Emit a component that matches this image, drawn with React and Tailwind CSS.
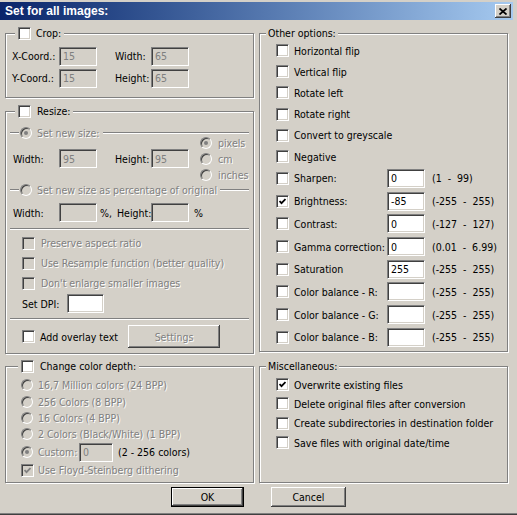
import React from "react";

const sunken =
  "border border-t-[#808080] border-l-[#808080] border-b-white border-r-white shadow-[inset_1px_1px_0_#404040,inset_-1px_-1px_0_#d4d0c8]";
const etched = "border border-[#808080] shadow-[inset_1px_1px_0_#fff,1px_1px_0_#fff]";
const grey = "text-[#808080] [text-shadow:1px_1px_0_#fff]";

function Field({ value = "", disabled = false, className = "w-[38px]" }) {
  return (
    <div
      className={`h-[19px] shrink-0 flex items-center pl-[3px] ${sunken} ${className} ${
        disabled ? "bg-[#d4d0c8] text-[#808080]" : "bg-white text-black"
      }`}
    >
      {value}
    </div>
  );
}

function Check({ checked = false, disabled = false }) {
  return (
    <span
      className={`w-[13px] h-[13px] shrink-0 flex items-center justify-center ${sunken} ${
        disabled ? "bg-[#d4d0c8]" : "bg-white"
      }`}
    >
      {checked && (
        <svg width="7" height="7" viewBox="0 0 7 7">
          <polyline points="0.5,3 2.5,5.2 6.5,1" fill="none" stroke={disabled ? "#808080" : "#000"} strokeWidth="1.8" />
        </svg>
      )}
    </span>
  );
}

function Radio({ checked = false }) {
  return (
    <span className={`w-[12px] h-[12px] shrink-0 rounded-full flex items-center justify-center bg-[#d4d0c8] ${sunken}`}>
      {checked && <span className="w-[4px] h-[4px] rounded-full bg-[#808080]" />}
    </span>
  );
}

function Line({ className = "" }) {
  return <div className={`h-[2px] border-t border-t-[#808080] border-b border-b-white ${className}`} />;
}

const plain = ["Horizontal flip", "Vertical flip", "Rotate left", "Rotate right", "Convert to greyscale", "Negative"];

const valued = [
  ["Sharpen:", "0", "(1  -  99)", false],
  ["Brightness:", "-85", "(-255  -  255)", true],
  ["Contrast:", "0", "(-127  -  127)", false],
  ["Gamma correction:", "0", "(0.01  -  6.99)", false],
  ["Saturation", "255", "(-255  -  255)", false],
  ["Color balance - R:", "", "(-255  -  255)", false],
  ["Color balance - G:", "", "(-255  -  255)", false],
  ["Color balance - B:", "", "(-255  -  255)", false],
];

const misc = [
  ["Overwrite existing files", true],
  ["Delete original files after conversion", false],
  ["Create subdirectories in destination folder", false],
  ["Save files with original date/time", false],
];

const depths = [
  ["16,7 Million colors (24 BPP)", "h-[16px]"],
  ["256 Colors (8 BPP)", "h-[17px]"],
  ["16 Colors (4 BPP)", "h-[16px]"],
  ["2 Colors (Black/White) (1 BPP)", "h-[16px]"],
];

export default function App() {
  return (
    <div className="w-[517px] h-[515px] overflow-hidden bg-[#d4d0c8] pt-[2px] flex flex-col whitespace-nowrap font-['DejaVu_Sans_Condensed','Liberation_Sans',Arial,sans-serif] text-[10.5px] leading-[14px] text-black shadow-[inset_0_-1px_0_#404040,inset_0_-2px_0_#808080]">
      {/* title bar */}
      <div className="h-[18px] mr-[4px] flex items-center justify-between pl-[5px] pr-[2px] bg-linear-to-r from-[#0a246a] to-[#a6caf0]">
        <span className="font-['Liberation_Sans',Arial,sans-serif] font-bold text-[12px] text-white">Set for all images:</span>
        <button className="w-[16px] h-[14px] flex items-center justify-center bg-[#d4d0c8] shadow-[inset_-1px_-1px_0_#404040,inset_1px_1px_0_#fff,inset_-2px_-2px_0_#808080]">
          <svg width="8" height="7" viewBox="0 0 8 7">
            <path d="M0.5 0.5 L7.5 6.5 M7.5 0.5 L0.5 6.5" stroke="#000" strokeWidth="1.7" />
          </svg>
        </button>
      </div>

      <div className="flex pt-[6px]">
        {/* left column */}
        <div className="ml-[5px] w-[249px] flex flex-col">
          <fieldset className={`h-[72px] ${etched}`}>
            <legend className="ml-[9px] px-[3px] bg-[#d4d0c8]">
              <div className="h-[14px] flex items-center gap-[5px]">
                <Check />
                <span>Crop:</span>
              </div>
            </legend>
            <div className="pt-[5px] pl-[6px]">
              {[
                ["X-Coord.:", "Width:"],
                ["Y-Coord.:", "Height:"],
              ].map(([a, b]) => (
                <div key={a} className="h-[22px] flex items-center">
                  <span className="w-[47px]">{a}</span>
                  <Field value="15" disabled />
                  <span className="ml-[18px] w-[36px]">{b}</span>
                  <Field value="65" disabled />
                </div>
              ))}
            </div>
          </fieldset>

          <fieldset className={`mt-[6px] h-[250px] ${etched}`}>
            <legend className="ml-[9px] px-[3px] bg-[#d4d0c8]">
              <div className="h-[14px] flex items-center gap-[6px]">
                <Check />
                <span>Resize:</span>
              </div>
            </legend>
            <div className="px-[4px] mt-[8px] h-[14px] flex items-center">
              <Line className="w-[9px]" />
              <span className="ml-[1px]">
                <Radio checked />
              </span>
              <span className={`ml-[5px] ${grey}`}>Set new size:</span>
              <Line className="flex-1 ml-[3px]" />
            </div>
            <div className="-mt-[5px] h-[48px] flex">
              <div className="w-[194px] pl-[7px] pt-[14px]">
                <div className="h-[19px] flex items-center">
                  <span className="w-[46px]">Width:</span>
                  <Field value="95" disabled />
                  <span className="ml-[18px] w-[36px]">Height:</span>
                  <Field value="95" disabled />
                </div>
              </div>
              <div className="flex flex-col">
                {[
                  ["pixels", true],
                  ["cm", false],
                  ["inches", false],
                ].map(([l, c]) => (
                  <div key={l} className="h-[16px] flex items-center gap-[6px]">
                    <Radio checked={c} />
                    <span className={grey}>{l}</span>
                  </div>
                ))}
              </div>
            </div>
            <div className="px-[4px] h-[14px] flex items-center">
              <Line className="w-[9px]" />
              <span className="ml-[1px]">
                <Radio />
              </span>
              <span className={`ml-[5px] ${grey}`}>Set new size as percentage of original</span>
              <Line className="flex-1 ml-[3px]" />
            </div>
            <div className="mt-[6px] pl-[7px] h-[19px] flex items-center">
              <span className="w-[46px]">Width:</span>
              <Field disabled />
              <span className="ml-[3px] w-[17px]">%,</span>
              <span className="w-[34px]">Height:</span>
              <Field disabled />
              <span className="ml-[5px]">%</span>
            </div>
            <Line className="mt-[6px] mx-[4px]" />
            <div className="mt-[3px] pl-[16px]">
              {["Preserve aspect ratio", "Use Resample function (better quality)", "Don't enlarge smaller images"].map((l) => (
                <div key={l} className="h-[20px] flex items-center gap-[6px]">
                  <Check disabled />
                  <span className={grey}>{l}</span>
                </div>
              ))}
              <div className="mt-[1px] h-[19px] flex items-center">
                <span className="w-[45px]">Set DPI:</span>
                <Field className="w-[37px]" />
              </div>
            </div>
            <Line className="mt-[5px] mx-[4px]" />
            <div className="mt-[5px] pl-[16px] h-[23px] flex items-center">
              <Check />
              <span className="ml-[5px] w-[88px]">Add overlay text</span>
              <button
                className={`w-[92px] h-[23px] bg-[#d4d0c8] shadow-[inset_-1px_-1px_0_#404040,inset_1px_1px_0_#fff,inset_-2px_-2px_0_#808080] ${grey}`}
              >
                Settings
              </button>
            </div>
          </fieldset>

          <fieldset className={`mt-[5px] h-[124px] ${etched}`}>
            <legend className="ml-[12px] px-[3px] bg-[#d4d0c8]">
              <div className="h-[14px] flex items-center gap-[6px]">
                <Check />
                <span>Change color depth:</span>
              </div>
            </legend>
            <div className="pt-[4px] pl-[15px]">
              {depths.map(([l, h]) => (
                <div key={l} className={`${h} flex items-center gap-[5px]`}>
                  <Radio />
                  <span className={grey}>{l}</span>
                </div>
              ))}
              <div className="h-[20px] flex items-center">
                <Radio checked />
                <span className={`ml-[5px] w-[41px] ${grey}`}>Custom:</span>
                <Field value="0" disabled className="w-[34px]" />
                <span className="ml-[5px]">(2 - 256 colors)</span>
              </div>
              <div className="h-[16px] flex items-center gap-[4px]">
                <Check checked disabled />
                <span className={grey}>Use Floyd-Steinberg dithering</span>
              </div>
            </div>
          </fieldset>
        </div>

        {/* right column */}
        <div className="ml-[5px] w-[249px] flex flex-col">
          <fieldset className={`h-[326px] ${etched}`}>
            <legend className="ml-[6px] px-[2px] bg-[#d4d0c8]">
              <div className="h-[14px] flex items-center">Other options:</div>
            </legend>
            <div className="pl-[16px]">
              {plain.map((l) => (
                <div key={l} className="h-[21.2px] flex items-center gap-[5px]">
                  <Check />
                  <span>{l}</span>
                </div>
              ))}
              {valued.map(([l, v, r, c]) => (
                <div key={l} className="h-[22.7px] flex items-center">
                  <Check checked={c} />
                  <span className="ml-[5px] w-[93px]">{l}</span>
                  <Field value={v} />
                  <span className="ml-[7px] whitespace-pre">{r}</span>
                </div>
              ))}
            </div>
          </fieldset>

          <fieldset className={`mt-[7px] h-[124px] ${etched}`}>
            <legend className="ml-[6px] px-[2px] bg-[#d4d0c8]">
              <div className="h-[14px] flex items-center">Miscellaneous:</div>
            </legend>
            <div className="pt-[2px] pl-[16px]">
              {misc.map(([l, c]) => (
                <div key={l} className="h-[19.3px] flex items-center gap-[5px]">
                  <Check checked={c} />
                  <span>{l}</span>
                </div>
              ))}
            </div>
          </fieldset>
        </div>
      </div>

      <div className="mt-[4px] flex justify-center gap-[27px]">
        <button className="w-[73px] h-[20px] bg-[#d4d0c8] border border-black shadow-[inset_-1px_-1px_0_#404040,inset_1px_1px_0_#fff,inset_-2px_-2px_0_#808080]">
          OK
        </button>
        <button className="w-[75px] h-[20px] bg-[#d4d0c8] shadow-[inset_-1px_-1px_0_#404040,inset_1px_1px_0_#fff,inset_-2px_-2px_0_#808080]">
          Cancel
        </button>
      </div>
    </div>
  );
}
